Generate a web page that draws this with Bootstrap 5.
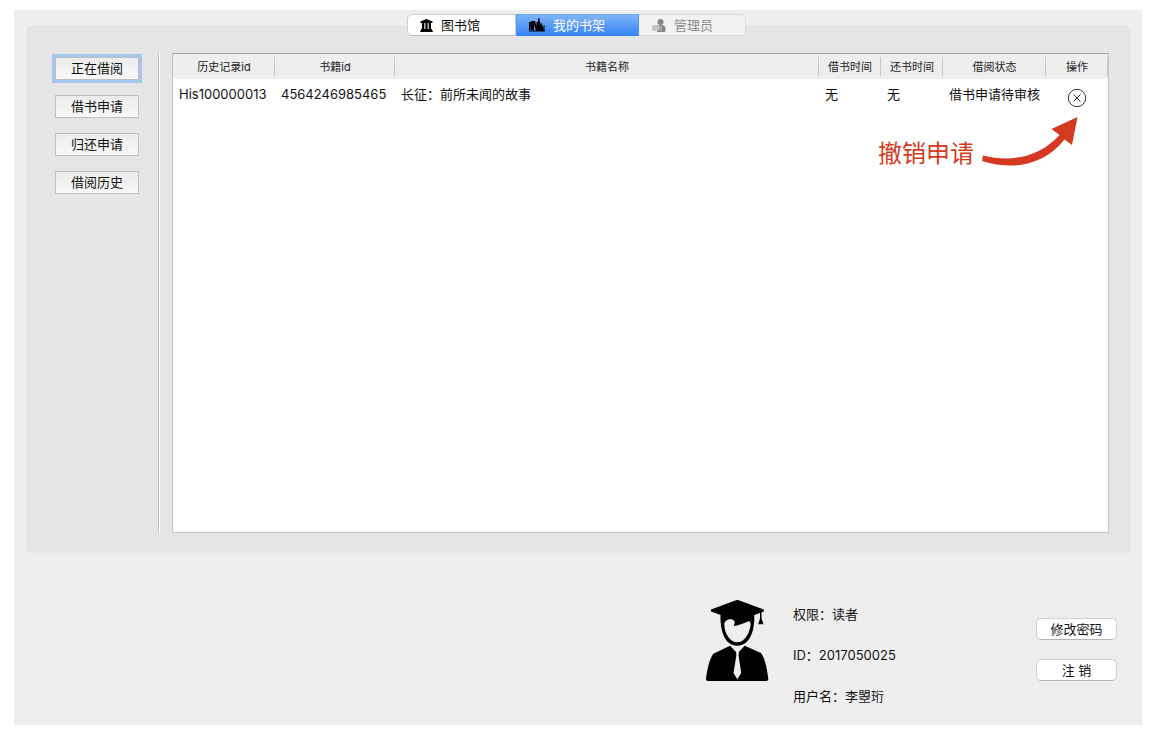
<!DOCTYPE html>
<html lang="zh-CN">
<head>
<meta charset="utf-8">
<meta name="viewport" content="width=device-width, initial-scale=1">
<title>我的书架</title>
<link rel="stylesheet" href="https://cdn.jsdelivr.net/npm/bootstrap@5.3.0/dist/css/bootstrap.min.css">
<style>
body{background:#fff;color:#111;font:13px/20px Inter,"Noto Sans CJK SC",sans-serif;padding:10px 10px 15px 14px;min-height:100vh}
.window{background:#eee;padding:4px 12px 19px 13px}
.tabs{position:relative;z-index:1;margin-bottom:-10px}
.tab-btn{height:22px;padding:0 12px;border:1px solid #cfcfcf;border-bottom-color:#bbb;background:#fff;color:#111;line-height:20px}
.tab-btn:first-child{border-radius:5px 0 0 5px;width:109px}
.tab-btn.active{background:linear-gradient(#7fb5f7,#3584f7);border-color:#6aa8f5 #4f97f7 #3584f7;color:#fff;width:123px}
.tab-btn:last-child{border-radius:0 5px 5px 0;width:107px;background:#f2f2f2;border-color:#dadada;border-left:0;color:#8c8c8c}
.panel{background:#e5e5e5;border:1px solid #e0e0e0;border-bottom-color:#e8e8e8;border-radius:4px;padding:26px 20px 19px 27px}
.side{width:84px;padding-top:4px;gap:15px}
.side-btn{height:23px;padding:0;border:1px solid #bfbfbf;background:linear-gradient(#ececec,#f8f8f8);color:#111;line-height:21px}
.side-btn.current{box-shadow:0 0 0 3px #a3c5ee}
.rule{width:2px;margin:0 12px 0 19px;background:linear-gradient(90deg,#bebebe 50%,#fff 50%)}
.sheet{background:#fff;border:1px solid #c4c4c4;border-top-color:#a3a3a3;min-height:480px}
.records{table-layout:fixed}
.records th{position:relative;height:25px;padding:0;background:#eee;font-size:11px;font-weight:400;line-height:16px;text-align:center;vertical-align:middle;color:#222}
.records th::after{content:"";position:absolute;right:0;top:3px;bottom:3px;width:1px;background:#c8c8c8}
.records td{padding:5px 6px;white-space:nowrap;vertical-align:top}
.w-his{width:102px}.w-id{width:120px}.w-time{width:62px}.w-state{width:103px}
.undo{display:block;margin:4px auto 0;padding:0;border:0;background:none;line-height:0}
.note{position:absolute;top:60px;right:28px;color:#d43a20;font-size:24px;line-height:28px;gap:6px}
.account{padding:46px 13px 0 0}
.facts{width:243px;margin-left:24px;gap:21px;padding-top:5px}
.acct-btn{width:81px;height:22px;padding:0;border:1px solid #cfcfcf;border-bottom-color:#b5b5b5;border-radius:5px;background:#fff;color:#111;line-height:20px}
.acct{gap:19px;padding-top:19px}
</style>
</head>
<body>
<main class="window">
  <nav class="tabs d-flex justify-content-center pe-1">
    <button type="button" class="tab-btn d-flex align-items-center">
      <svg class="me-2" width="13" height="13" viewBox="0 0 13 13"><path d="M6.500 0 12.500 2.500V4H.5V2.500zM2 4h2.300v6H2zM5.400 4h2.200v6H5.400zM8.700 4H11v6H8.700zM1 10h11v1.500h.8V13H.2v-1.500H1z"/></svg>图书馆</button>
    <button type="button" class="tab-btn active d-flex align-items-center">
      <svg class="me-2" width="16" height="14" viewBox="0 0 16 14" fill="#000"><path d="M0 4h1.700v8H0zM2 3h2v9H2zM4 3h2l1.500 5V4h1.300l.5-4h1l1 6 1-1.500L14.500 11V7h1v5.500H7L5 6.500v6H4zM0 12.500h16v1H0z"/></svg>我的书架</button>
    <button type="button" class="tab-btn d-flex align-items-center">
      <svg class="me-2" width="15" height="13" viewBox="0 0 15 13"><circle cx="9.500" cy="3" r="3" fill="#858585"/><path d="M6 13V9q0-3 4-3t4.500 3v3l-1 1z" fill="#858585"/><rect x="1" y="6" width="7.500" height="6" rx="2" fill="#c4c4c4"/><path d="M10 7v5" stroke="#ccc"/></svg>管理员</button>
  </nav>
  <section class="panel d-flex">
    <div class="side d-flex flex-column flex-shrink-0">
      <button type="button" class="side-btn current">正在借阅</button>
      <button type="button" class="side-btn">借书申请</button>
      <button type="button" class="side-btn">归还申请</button>
      <button type="button" class="side-btn">借阅历史</button>
    </div>
    <div class="rule flex-shrink-0"></div>
    <div class="sheet flex-fill position-relative">
      <table class="records w-100">
        <thead><tr><th class="w-his">历史记录id</th><th class="w-id">书籍id</th><th>书籍名称</th><th class="w-time">借书时间</th><th class="w-time">还书时间</th><th class="w-state">借阅状态</th><th class="w-time">操作</th></tr></thead>
        <tbody><tr><td>His100000013</td><td>4564246985465</td><td>长征：前所未闻的故事</td><td>无</td><td>无</td><td>借书申请待审核</td>
          <td><button type="button" class="undo" aria-label="撤销申请"><svg width="20" height="20" viewBox="0 0 20 20" fill="none" stroke="#333"><circle cx="10" cy="10" r="8.700"/><path d="m6.500 6.500 7 7m0-7-7 7"/></svg></button></td></tr></tbody>
      </table>
      <div class="note d-flex align-items-end"><span>撤销申请</span>
        <svg width="100" height="54" viewBox="0 0 100 54" fill="#d43a20"><path d="M3 41.500C34 49 60 42 79.500 21L71.500 15 97.500 3 92 31 84.500 25.500C64 51 34 57 2 47z"/></svg></div>
    </div>
  </section>
  <section class="account d-flex justify-content-end align-items-start">
    <svg class="flex-shrink-0" width="63" height="83" viewBox="0 0 63 83">
      <path d="M31.300.7 57.800 10.500v2L48.300 16c.5 17-5 30.700-17 30.700S14 33 14.500 16L5 12.500v-2z"/>
      <path fill="#eee" d="M18.300 25c.3-5 8.500-6.300 10.200-2.700.7 1.700-.5 3.200-.7 4.700 6-.5 10-3 15.700-5l1.200 2.700c-.5 8.800-6 18.600-13.400 18.600S18.200 34 18.300 25z"/>
      <path d="M54 11h1.500v8.500l2 5.700h-5.300l1.800-5.700z"/>
      <path d="M24 46.700 30 53h2.700l6-6.300L55 54c4 5 6 15 7.300 25.500q.2 2.500-2 2.500H2q-2.200 0-2-2.500C1.500 69 3.500 60 7.300 54.700z"/>
      <path fill="#eee" d="M30 53h3l-.5 3 2.700 18-3.900 6.300L27.500 74l2.900-18z"/>
    </svg>
    <div class="facts d-flex flex-column"><span>权限：读者</span><span>ID：2017050025</span><span>用户名：李曌珩</span></div>
    <div class="acct d-flex flex-column">
      <button type="button" class="acct-btn">修改密码</button>
      <button type="button" class="acct-btn">注 销</button>
    </div>
  </section>
</main>
<script src="https://cdn.jsdelivr.net/npm/bootstrap@5.3.0/dist/js/bootstrap.bundle.min.js"></script>
</body>
</html>
